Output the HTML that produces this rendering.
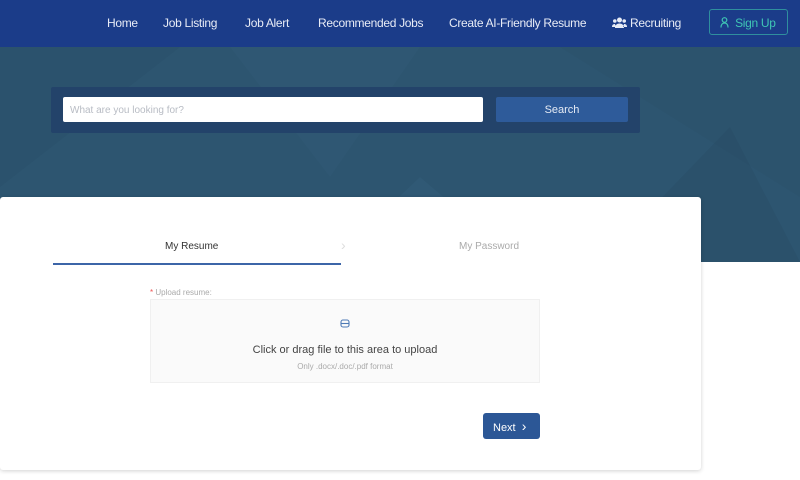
<!DOCTYPE html>
<html><head><meta charset="utf-8"><style>
*{margin:0;padding:0;box-sizing:border-box}
body{width:800px;height:480px;overflow:hidden;background:#fff;font-family:"Liberation Sans",sans-serif;position:relative}
.nav{position:absolute;left:0;top:0;width:800px;height:47px;background:#1b3c89}
.nav a{position:absolute;top:16px;color:#e8ecf6;font-size:12px;text-decoration:none;white-space:nowrap;letter-spacing:-0.3px}
.signup{position:absolute;left:709px;top:9px;width:79px;height:26px;border:1.5px solid #2f8f9e;border-radius:3px;color:#3fc6b4;font-size:12px;padding:6px 0 0 10px;letter-spacing:-0.3px}
.hero{position:absolute;left:0;top:47px;width:800px;height:215px;background:#2d5570;overflow:hidden}
.sbox{position:absolute;left:51px;top:87px;width:589px;height:46px;background:#23436a;border-radius:2px}
.inp{position:absolute;left:63px;top:97px;width:420px;height:25px;background:#fff;border-radius:2px;color:#b8bcc4;font-size:10px;padding:8px 0 0 7px}
.sbtn{position:absolute;left:496px;top:97px;width:132px;height:25px;background:#2e5b9a;border-radius:2px;color:#e5ebf5;font-size:11px;text-align:center;line-height:27px}
.card{position:absolute;left:0;top:197px;width:701px;height:273px;background:#fff;border-radius:3px;box-shadow:0 1px 4px rgba(0,0,0,.18)}
</style></head><body>
<div class="nav">
<a style="left:107px">Home</a>
<a style="left:163px">Job Listing</a>
<a style="left:245px">Job Alert</a>
<a style="left:318px">Recommended Jobs</a>
<a style="left:449px">Create AI-Friendly Resume</a>
<a style="left:612px"><svg width="15" height="11" viewBox="0 0 15 11" style="vertical-align:-1px"><circle cx="7.5" cy="3" r="2.5" fill="#e8ecf6"/><circle cx="2.8" cy="4" r="1.8" fill="#e8ecf6"/><circle cx="12.2" cy="4" r="1.8" fill="#e8ecf6"/><path d="M3 11c0-3 2-4.5 4.5-4.5S12 8 12 11z M0 10c0-2 1-3 3-3l1 3z M15 10c0-2-1-3-3-3l-1 3z" fill="#e8ecf6"/></svg> Recruiting</a>
<div class="signup"><svg width="9" height="11" viewBox="0 0 9 11" style="vertical-align:-1px"><circle cx="4.5" cy="3" r="2.3" fill="none" stroke="#3fc6b4" stroke-width="1.2"/><path d="M1 10.5c0-3 1.5-4.5 3.5-4.5S8 7.5 8 10.5" fill="none" stroke="#3fc6b4" stroke-width="1.2"/></svg>&nbsp; Sign Up</div>
</div>
<div class="hero">
<svg width="800" height="215" style="position:absolute;left:0;top:0">
<polygon points="0,0 180,0 0,140" fill="#2a4f6a" opacity=".5"/>
<polygon points="230,0 420,0 330,130" fill="#335d78" opacity=".35"/>
<polygon points="330,215 420,130 520,215" fill="#36627e" opacity=".35"/>
<polygon points="560,0 800,0 800,150" fill="#2b5069" opacity=".4"/>
<polygon points="600,215 730,80 800,215" fill="#284a63" opacity=".4"/>
<polygon points="0,215 60,150 160,215" fill="#335c76" opacity=".3"/>
</svg>
</div>
<div class="sbox"></div>
<div class="inp">What are you looking for?</div>
<div class="sbtn">Search</div>
<div class="card">
<div style="position:absolute;left:165px;top:44px;font-size:10px;color:#333">My Resume</div>
<div style="position:absolute;left:341px;top:40px;font-size:14px;color:#ddd">›</div>
<div style="position:absolute;left:459px;top:44px;font-size:10px;color:#aaa">My Password</div>
<div style="position:absolute;left:53px;top:66px;width:288px;height:2px;background:#3c65a8"></div>
<div style="position:absolute;left:150px;top:91px;font-size:8px;color:#aaa"><span style="color:#e55">*</span> Upload resume:</div>
<div style="position:absolute;left:150px;top:102px;width:390px;height:84px;background:#fafafa;border:1px solid #f0f0f0"></div>
<svg width="10" height="10" viewBox="0 0 10 10" style="position:absolute;left:340px;top:121px"><rect x="1" y="2" width="8" height="7" rx="2" fill="none" stroke="#4d79b5" stroke-width="1.1"/><path d="M1 5.5h8" stroke="#4d79b5" stroke-width="1.1"/></svg>
<div style="position:absolute;left:150px;top:147px;width:390px;text-align:center;font-size:11px;color:#444">Click or drag file to this area to upload</div>
<div style="position:absolute;left:150px;top:165px;width:390px;text-align:center;font-size:8px;color:#aaa">Only .docx/.doc/.pdf format</div>
<div style="position:absolute;left:483px;top:216px;width:57px;height:26px;background:#2c5796;border-radius:3px;color:#fff;font-size:11px;line-height:26px;padding-left:10px">Next &nbsp;<span style="font-size:14px">›</span></div>
</div>
</body></html>
